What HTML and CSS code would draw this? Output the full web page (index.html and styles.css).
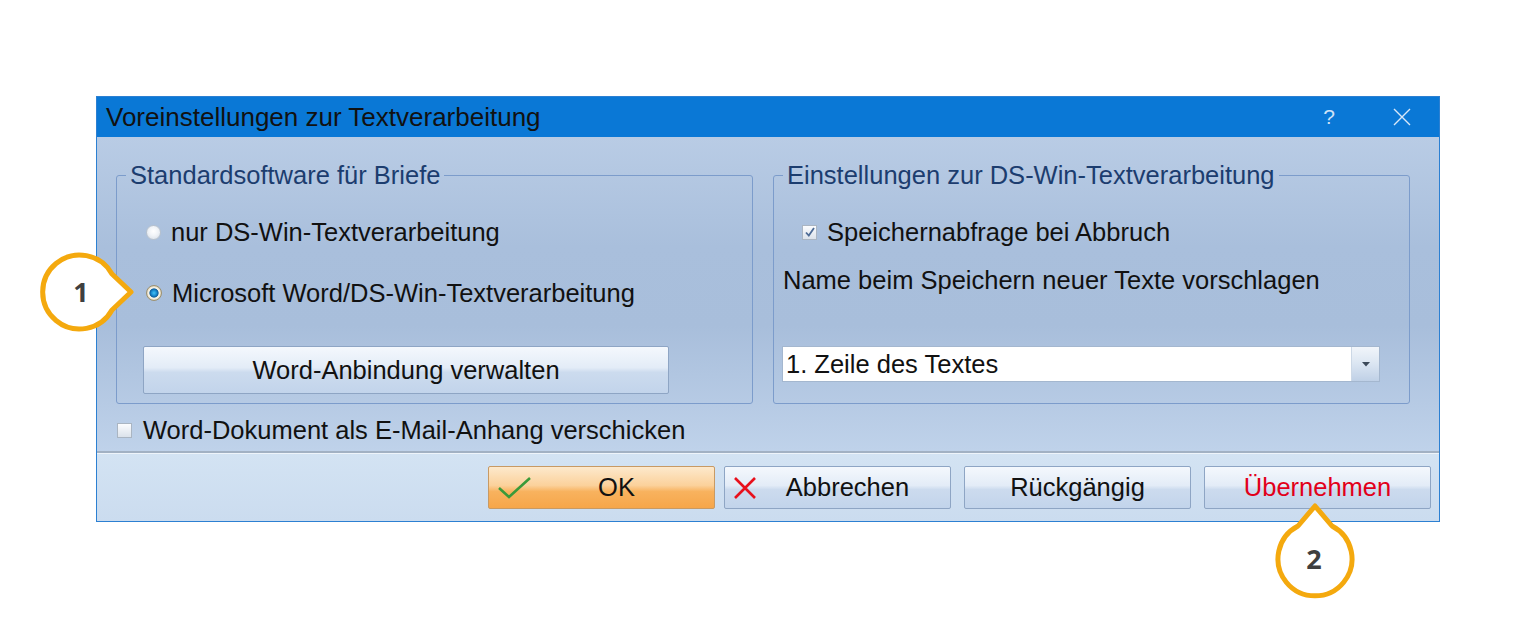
FILE: index.html
```html
<!DOCTYPE html>
<html lang="de">
<head>
<meta charset="utf-8">
<title>Voreinstellungen zur Textverarbeitung</title>
<link rel="stylesheet" href="styles.css">
</head>
<body>
<div class="page">
  <div class="dialog">
    <div class="titlebar">
      <span class="title">Voreinstellungen zur Textverarbeitung</span>
      <span class="tb-btns">
        <span class="help">?</span>
        <svg class="close" width="18" height="18" viewBox="0 0 18 18"><path d="M1 1 L17 17 M17 1 L1 17" stroke="#d8e8f8" stroke-width="1.4" fill="none"/></svg>
      </span>
    </div>
    <div class="content">
      <div class="groups">
        <fieldset class="group g1">
          <legend>Standardsoftware für Briefe</legend>
          <div class="opt r1"><span class="radio"></span>nur DS-Win-Textverarbeitung</div>
          <div class="opt r2"><span class="radio on"></span>Microsoft Word/DS-Win-Textverarbeitung</div>
          <button class="btn wide">Word-Anbindung verwalten</button>
        </fieldset>
        <fieldset class="group g2">
          <legend>Einstellungen zur DS-Win-Textverarbeitung</legend>
          <div class="opt c1"><span class="check on"><svg width="12" height="12" viewBox="0 0 12 12"><path d="M2 6.5 L4.8 9.5 L10 2" stroke="#4d6b96" stroke-width="1.8" fill="none"/></svg></span>Speichernabfrage bei Abbruch</div>
          <div class="label">Name beim Speichern neuer Texte vorschlagen</div>
          <div class="combo">
            <span class="combo-text">1. Zeile des Textes</span>
            <span class="combo-btn"><svg width="8" height="5" viewBox="0 0 8 5"><path d="M0 0 H8 L4 4.5 Z" fill="#3c4a5a"/></svg></span>
          </div>
        </fieldset>
      </div>
      <div class="opt mail"><span class="check"></span>Word-Dokument als E-Mail-Anhang verschicken</div>
    </div>
    <div class="footer">
      <button class="btn fbtn ok"><span class="ico"><svg width="36" height="24" viewBox="0 0 36 24"><path d="M2 12 L12 21 L33 2" stroke="#3a9a3a" stroke-width="2.6" fill="none"/></svg></span><span class="txt">OK</span></button>
      <button class="btn fbtn cancel"><span class="ico"><svg width="26" height="26" viewBox="0 0 26 26"><path d="M3 3 L23 23 M23 3 L3 23" stroke="#e8101c" stroke-width="2.6" fill="none"/></svg></span><span class="txt">Abbrechen</span></button>
      <button class="btn fbtn undo">Rückgängig</button>
      <button class="btn fbtn apply">Übernehmen</button>
    </div>
  </div>
  <svg class="callouts" width="1536" height="618" viewBox="0 0 1536 618">
    <path d="M131 292 L112 274 A37 37 0 1 0 112 310 Z" fill="#ffffff" stroke="#f4a90e" stroke-width="5" stroke-linejoin="round"/>
    <text x="81" y="302" class="num" text-anchor="middle">1</text>
    <path d="M1315 506 L1332 526 A37 37 0 1 1 1298 526 Z" fill="#ffffff" stroke="#f4a90e" stroke-width="5" stroke-linejoin="round"/>
    <text x="1314" y="569" class="num" text-anchor="middle">2</text>
  </svg>
</div>
</body>
</html>
```

FILE: styles.css
```css
* { box-sizing: border-box; }
html, body { margin: 0; padding: 0; background: #ffffff; }
body { font-family: "Liberation Sans", Arial, sans-serif; color: #111; }

.page { position: relative; width: 1536px; height: 618px; padding: 96px 0 0 96px; }

.dialog {
  width: 1344px;
  height: 426px;
  border: 1px solid #2c80d2;
  display: flex;
  flex-direction: column;
}

.titlebar {
  height: 40px;
  flex: none;
  background: #0a78d6;
  display: flex;
  align-items: center;
  justify-content: space-between;
  padding: 0 28px 0 9px;
}
.title { font-size: 26px; color: #111111; }
.tb-btns { display: flex; align-items: center; gap: 58px; }
.help { font-size: 21px; color: #cfe2f6; }
.close { display: block; }

.content {
  height: 316px;
  flex: none;
  padding: 24px 0 0 19px;
  background: linear-gradient(#b9cce5 0%, #a9bfdc 35%, #a8bedb 60%, #bfd2ea 100%);
  border-bottom: 2px solid #a2b1c3;
}

.groups { display: flex; gap: 20px; }

.group {
  margin: 0;
  width: 637px;
  height: 243px;
  border: 1px solid #7c9ccb;
  border-radius: 3px;
  padding: 0;
  min-width: 0;
}
.group legend {
  margin-left: 9px;
  padding: 0 4px;
  font-size: 25.5px;
  line-height: 28px;
  color: #1c3d6f;
}

.opt {
  display: flex;
  align-items: center;
  font-size: 25.5px;
  line-height: 28px;
  height: 28px;
}

.g1 { padding-top: 29px; }
.g1 .r1 { margin-left: 29px; }
.g1 .r2 { margin-left: 29px; margin-top: 33px; }
.g1 .radio { margin-right: 10px; }

.radio {
  width: 15px;
  height: 15px;
  border-radius: 50%;
  border: 1px solid #b9c3ce;
  background: radial-gradient(circle at 50% 40%, #ffffff 0%, #f0f3f7 45%, #d3dbe5 100%);
  flex: none;
}
.radio.on {
  width: 16px;
  height: 16px;
  border: 1px solid #9d9170;
  background: radial-gradient(circle at 50% 50%, #45c3f5 0%, #1d8fd4 2.5px, #0e5e9c 4.2px, #f7f4ea 5px, #f2ecdc 6px, #d8cfb4 7px);
}

.btn {
  font-family: "Liberation Sans", Arial, sans-serif;
  font-size: 25.5px;
  color: #111;
  border: 1px solid #8ea5c4;
  border-radius: 2px;
  background: linear-gradient(#f4f8fd 0%, #e3ecf7 45%, #ccdbee 55%, #c2d4eb 100%);
  padding: 0;
  cursor: default;
}
.wide { display: block; width: 526px; height: 48px; margin: 39px 0 0 26px; }

.g2 { padding-top: 29px; }
.g2 .c1 { margin-left: 28px; }
.check {
  width: 15px;
  height: 15px;
  border: 1px solid #aab5c2;
  background: linear-gradient(#fbfcfe, #dbe2eb);
  flex: none;
  margin-right: 10px;
  display: flex;
  align-items: center;
  justify-content: center;
}
.check svg { display: block; }
.label { font-size: 25.5px; line-height: 28px; margin-top: 20px; margin-left: 9px; }
.combo {
  margin: 52px 0 0 8px;
  width: 598px;
  height: 36px;
  background: #ffffff;
  border: 1px solid #a4b7cf;
  display: flex;
  align-items: center;
  justify-content: space-between;
}
.combo-text { font-size: 25.5px; padding-left: 3px; }
.combo-btn {
  width: 28px;
  height: 34px;
  border-left: 1px solid #ccd8e6;
  background: linear-gradient(#f1f5fa 0%, #dde7f3 45%, #bfd0e6 100%);
  display: flex;
  align-items: center;
  justify-content: center;
}
.combo-btn svg { display: block; }

.mail { margin-top: 12px; margin-left: 1px; }
.mail .check { margin-right: 11px; }

.footer {
  flex: 1;
  background: linear-gradient(#d3e3f3, #cbdcef);
  border-top: 1px solid #eef4fa;
  display: flex;
  justify-content: flex-end;
  align-items: flex-start;
  padding: 12px 8px 0 0;
}
.fbtn {
  width: 227px;
  height: 43px;
  margin-left: 13px;
  display: flex;
  align-items: center;
  justify-content: center;
}
.fbtn.cancel { margin-left: 9px; }
.fbtn.ok, .fbtn.cancel { justify-content: flex-start; }
.fbtn .ico { width: 44px; flex: none; display: flex; align-items: center; padding-left: 8px; }
.fbtn .ico svg { display: block; }
.fbtn .txt { flex: 1; text-align: center; padding-right: 14px; }
.cancel .ico { padding-left: 7px; }
.cancel .txt { padding-right: 24px; }
.ok {
  border: 1px solid #c89a64;
  background: linear-gradient(#fde9cc 0%, #fbd19b 45%, #f8b25e 60%, #f6a64a 100%);
}
.apply { color: #e2001a; }

.callouts { position: absolute; left: 0; top: 0; pointer-events: none; }
.num { font-family: "Open Sans", "DejaVu Sans", sans-serif; font-weight: 700; font-size: 27px; fill: #3f3f3f; }
```
